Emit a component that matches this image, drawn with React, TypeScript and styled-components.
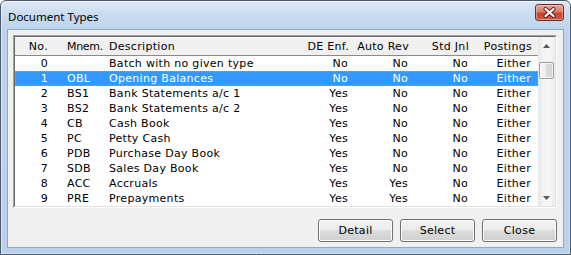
import React from "react";
import styled, { createGlobalStyle } from "styled-components";

const Global = createGlobalStyle`
  html, body { margin: 0; padding: 0; background: #ffffff; }
  #root { width: 571px; height: 255px; }
`;

const Window = styled.div`
  box-sizing: border-box;
  width: 571px;
  height: 255px;
  border: 1px solid #4a5869;
  border-radius: 6px 6px 0 0;
  background: linear-gradient(to bottom, #dfe9f5 0px, #c9dbef 14px, #bcd3eb 30px, #b9d1ea 100%);
  padding: 0 6px 6px 6px;
  display: flex;
  flex-direction: column;
  box-shadow: inset 1px 1px 0 rgba(255, 255, 255, 0.55), inset -1px -1px 0 rgba(255, 255, 255, 0.35);
`;

const TitleBar = styled.div`
  height: 28px;
  display: flex;
  align-items: center;
  justify-content: space-between;
  padding-left: 1px;
`;

const Title = styled.span`
  font-family: "Noto Sans", "Liberation Sans", sans-serif;
  font-size: 11.5px;
  color: #000;
  margin-top: 2px;
`;

const CloseBtn = styled.div`
  box-sizing: border-box;
  align-self: flex-start;
  margin-top: 3px;
  width: 29px;
  height: 17px;
  border: 1px solid #6e2c24;
  border-radius: 3px;
  background: linear-gradient(to bottom, #e9a99d 0%, #da7a69 45%, #c7452f 55%, #cf5a45 100%);
  box-shadow: inset 0 0 0 1px rgba(255, 220, 210, 0.45);
  display: flex;
  align-items: center;
  justify-content: center;
`;

const Client = styled.div`
  flex: 1;
  border: 1px solid #8ea8c6;
  background: #f0f0f0;
  padding: 5px 6px 5px 5px;
  display: flex;
  flex-direction: column;
  font-family: "DejaVu Sans", "Liberation Sans", sans-serif;
  font-size: 11px;
  letter-spacing: 0.3px;
  color: #000;
`;

const ListOuter = styled.div`
  box-sizing: border-box;
  height: 173px;
  border: 1px solid;
  border-color: #a0a0a0 #ffffff #ffffff #a0a0a0;
  display: flex;
`;

const ListInner = styled.div`
  flex: 1;
  border: 1px solid;
  border-color: #696969 #e3e3e3 #e3e3e3 #696969;
  background: #fff;
  display: flex;
`;

const Table = styled.div`
  width: 523px;
  display: flex;
  flex-direction: column;
`;

const cols = "39px 49px 187px 65px 60px 60px 63px";

const HeaderRow = styled.div`
  box-sizing: border-box;
  height: 19px;
  display: grid;
  grid-template-columns: ${cols};
  align-items: center;
  background: #f0f0f0;
  border-top: 1px solid #ffffff;
  border-bottom: 1px solid #8a8a8a;
`;

const Row = styled.div<{ $selected?: boolean }>`
  box-sizing: border-box;
  height: 15px;
  display: grid;
  grid-template-columns: ${cols};
  align-items: center;
  background: ${(p) => (p.$selected ? "#3399ff" : "transparent")};
  color: ${(p) => (p.$selected ? "#ffffff" : "#000000")};
  outline: ${(p) => (p.$selected ? "1px dotted #e0904a" : "none")};
  outline-offset: -1px;
`;

const Cell = styled.div<{ $right?: boolean; $inset?: number; $tight?: boolean }>`
  text-align: ${(p) => (p.$right ? "right" : "left")};
  padding-left: ${(p) => (p.$right ? 0 : p.$inset ?? 6)}px;
  padding-right: ${(p) => (p.$right ? p.$inset ?? 6 : 0)}px;
  letter-spacing: ${(p) => (p.$tight ? "-0.3px" : "0.3px")};
  white-space: nowrap;
  overflow: visible;
  line-height: 15px;
`;

const ScrollBar = styled.div`
  width: 17px;
  display: flex;
  flex-direction: column;
  background: linear-gradient(to right, #e6e6e6, #f4f4f4 30%, #f6f6f6 70%, #ececec);
`;

const ArrowBtn = styled.div`
  height: 17px;
  display: flex;
  align-items: center;
  justify-content: center;
`;

const Track = styled.div`
  flex: 1;
  display: flex;
  flex-direction: column;
`;

const Thumb = styled.div`
  box-sizing: border-box;
  margin: 8px 1px 0 1px;
  height: 17px;
  border: 1px solid #9c9c9c;
  border-radius: 2px;
  background: linear-gradient(to right, #f7f7f7, #ececec 50%, #dcdcdc 50%, #d2d2d2);
  box-shadow: inset 0 0 0 1px rgba(255, 255, 255, 0.7);
`;

const ButtonRow = styled.div`
  margin-top: 11px;
  display: flex;
  justify-content: flex-end;
  gap: 7px;
`;

const Button = styled.div`
  box-sizing: border-box;
  width: 75px;
  height: 23px;
  border: 1px solid #707070;
  border-radius: 3px;
  background: linear-gradient(to bottom, #f2f2f2 0%, #ebebeb 50%, #dddddd 50%, #cfcfcf 100%);
  box-shadow: inset 0 0 0 1px #fcfcfc;
  display: flex;
  align-items: center;
  justify-content: center;
`;

type Doc = { no: string; mn: string; desc: string; de: string; ar: string; sj: string; po: string };

const rows: Doc[] = [
  { no: "0", mn: "", desc: "Batch with no given type", de: "No", ar: "No", sj: "No", po: "Either" },
  { no: "1", mn: "OBL", desc: "Opening Balances", de: "No", ar: "No", sj: "No", po: "Either" },
  { no: "2", mn: "BS1", desc: "Bank Statements a/c 1", de: "Yes", ar: "No", sj: "No", po: "Either" },
  { no: "3", mn: "BS2", desc: "Bank Statements a/c 2", de: "Yes", ar: "No", sj: "No", po: "Either" },
  { no: "4", mn: "CB", desc: "Cash Book", de: "Yes", ar: "No", sj: "No", po: "Either" },
  { no: "5", mn: "PC", desc: "Petty Cash", de: "Yes", ar: "No", sj: "No", po: "Either" },
  { no: "6", mn: "PDB", desc: "Purchase Day Book", de: "Yes", ar: "No", sj: "No", po: "Either" },
  { no: "7", mn: "SDB", desc: "Sales Day Book", de: "Yes", ar: "No", sj: "No", po: "Either" },
  { no: "8", mn: "ACC", desc: "Accruals", de: "Yes", ar: "Yes", sj: "No", po: "Either" },
  { no: "9", mn: "PRE", desc: "Prepayments", de: "Yes", ar: "Yes", sj: "No", po: "Either" },
];

const CloseIcon = () => (
  <svg width="13" height="11" viewBox="0 0 13 11">
    <path d="M2.5 2 L10.5 9 M10.5 2 L2.5 9" stroke="#5a1f18" strokeWidth="4" strokeLinecap="round" />
    <path d="M2.5 2 L10.5 9 M10.5 2 L2.5 9" stroke="#ffffff" strokeWidth="2.2" strokeLinecap="round" />
  </svg>
);

const Arrow = ({ down }: { down?: boolean }) => (
  <svg width="7" height="4" viewBox="0 0 7 4">
    <path d={down ? "M0 0 H7 L3.5 4 Z" : "M0 4 H7 L3.5 0 Z"} fill="#5a5a5a" />
  </svg>
);

export default function App() {
  return (
    <>
      <Global />
      <Window>
        <TitleBar>
          <Title>Document Types</Title>
          <CloseBtn>
            <CloseIcon />
          </CloseBtn>
        </TitleBar>
        <Client>
          <ListOuter>
            <ListInner>
              <Table>
                <HeaderRow>
                  <Cell $right>No.</Cell>
                  <Cell $inset={13} $tight>Mnem.</Cell>
                  <Cell>Description</Cell>
                  <Cell $right>DE Enf.</Cell>
                  <Cell $right>Auto Rev</Cell>
                  <Cell $right>Std Jnl</Cell>
                  <Cell $right>Postings</Cell>
                </HeaderRow>
                {rows.map((r, i) => (
                  <Row key={r.no} $selected={i === 1}>
                    <Cell $right>{r.no}</Cell>
                    <Cell $inset={13}>{r.mn}</Cell>
                    <Cell>{r.desc}</Cell>
                    <Cell $right $inset={7}>{r.de}</Cell>
                    <Cell $right $inset={7}>{r.ar}</Cell>
                    <Cell $right $inset={7}>{r.sj}</Cell>
                    <Cell $right $inset={7}>{r.po}</Cell>
                  </Row>
                ))}
              </Table>
              <ScrollBar>
                <ArrowBtn>
                  <Arrow />
                </ArrowBtn>
                <Track>
                  <Thumb />
                </Track>
                <ArrowBtn>
                  <Arrow down />
                </ArrowBtn>
              </ScrollBar>
            </ListInner>
          </ListOuter>
          <ButtonRow>
            <Button>Detail</Button>
            <Button>Select</Button>
            <Button>Close</Button>
          </ButtonRow>
        </Client>
      </Window>
    </>
  );
}
